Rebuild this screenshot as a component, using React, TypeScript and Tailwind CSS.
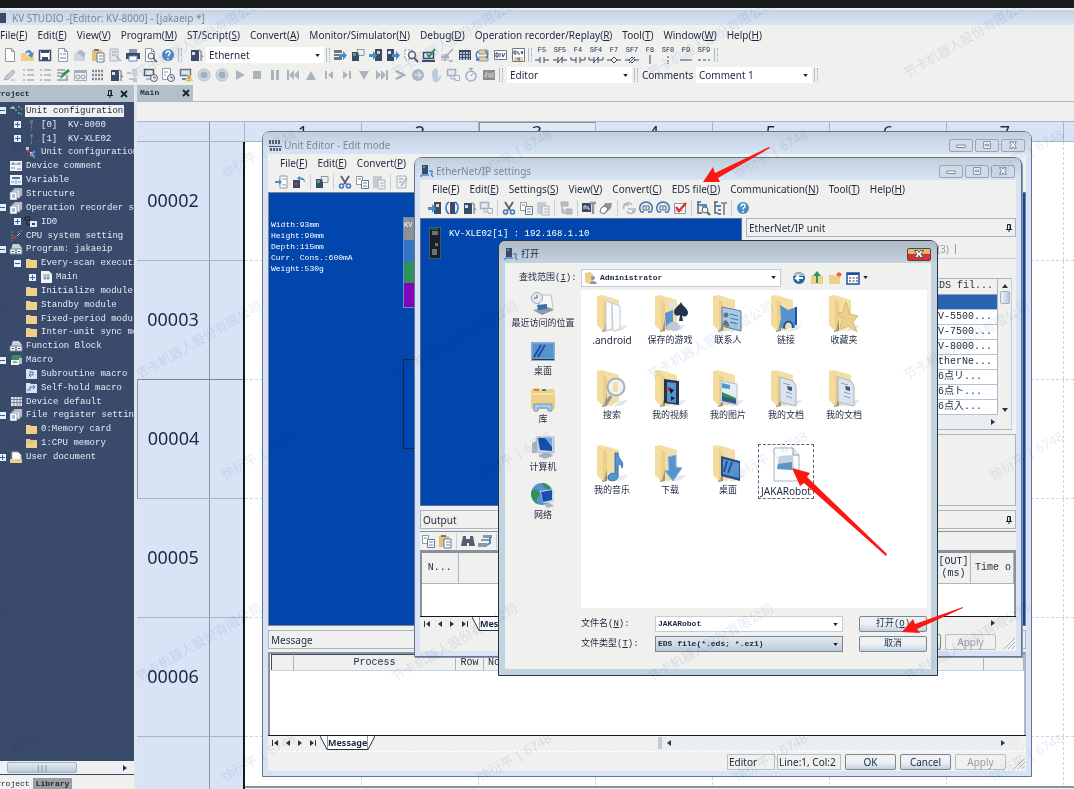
import { ReactNode } from "react";
import clsx from "clsx";

const UI = "font-['Noto_Sans','Noto_Sans_CJK_SC',sans-serif]";
const MONO = "font-['Liberation_Mono','Noto_Sans_CJK_JP',monospace]";
const SONG = "font-['Liberation_Mono','Noto_Sans_CJK_SC',monospace]";

type Entry = [string, string];

const MAIN_MENU: Entry[] = [
  ["File", "F"], ["Edit", "E"], ["View", "V"], ["Program", "M"], ["ST/Script", "S"], ["Convert", "A"],
  ["Monitor/Simulator", "N"], ["Debug", "D"], ["Operation recorder/Replay", "R"], ["Tool", "T"], ["Window", "W"], ["Help", "H"],
];
const UNIT_MENU: Entry[] = [["File", "F"], ["Edit", "E"], ["Convert", "P"]];
const EIP_MENU: Entry[] = [
  ["File", "F"], ["Edit", "E"], ["Settings", "S"], ["View", "V"], ["Convert", "C"], ["EDS file", "D"],
  ["Communication", "N"], ["Tool", "T"], ["Help", "H"],
];

const FILE_BAR = ["new", "open", "save", "doc", "openOff", "paste", "findOff", "print", "preview", "help"];
const COMM_BAR = ["send", "plcNote", "plcIn", "plcOut", "find", "verify", "gridOff", "table", "sync", "div", "dev"];
const VIEW_BAR = ["pen", "list", "list", "edit", "watch", "pattern", "plc", "download", "pcClock", "docClock", "pcWarn"];
const PLAY_BAR = [
  "record", "record", "play", "stop", "pause", "first", "up", "prev", "next", "down", "last", "gt",
  "globe", "hand", "pcOff", "timer", "badge",
];
const UNIT_BAR = ["import", "undoPlc", "|", "plcNote", "|", "cut", "copy", "pasteOff", "|", "editOff"];
const EIP_BAR = [
  "plcIn", "swap", "plc", "pcOff", "|", "cut", "copy", "pasteOff", "|", "treeOff", "|", "tool", "eraser", "|",
  "syncOff", "circle", "circle", "check", "|", "treeFind", "treeTool", "|", "help",
];
const FKEYS: Entry[] = [
  ["F5", "M1 8h5M10 8h5M6 5v6M10 5v6"], ["SF5", "M1 8h5M10 8h5M6 5v6M10 5v6M5 11l6-6"],
  ["F4", "M1 5v3h5M10 8h5V5M6 5v6M10 5v6"], ["SF4", "M1 5v3h5M10 8h5V5M6 5v6M10 5v6M5 11l6-6"],
  ["F7", "M1 8h4M11 8h4M8 5l3 3-3 3-3-3z"], ["SF7", "M1 8h4M11 8h4M8 5l3 3-3 3-3-3zM5 11l6-6"],
  ["F8", "M8 3v9"], ["SF8", "M8 4v2M8 8v2M8 11v1"], ["F9", "M2 8h12"], ["SF9", "M2 8h3M7 8h3M12 8h2"],
];

interface Node {
  level: 0 | 1 | 2;
  icon: string;
  text: string;
  sign?: "+" | "-";
  active?: boolean;
}

const TREE: Node[] = [
  { level: 0, icon: "units", text: "Unit configuration", sign: "-", active: true },
  { level: 1, icon: "unit", text: "[0]  KV-8000", sign: "+" },
  { level: 1, icon: "unit", text: "[1]  KV-XLE02", sign: "+" },
  { level: 1, icon: "config", text: "Unit configuration" },
  { level: 0, icon: "comment", text: "Device comment" },
  { level: 0, icon: "variable", text: "Variable" },
  { level: 0, icon: "stack", text: "Structure" },
  { level: 0, icon: "stack", text: "Operation recorder setting", sign: "-" },
  { level: 1, icon: "id", text: "ID0", sign: "+" },
  { level: 0, icon: "cpu", text: "CPU system setting" },
  { level: 0, icon: "program", text: "Program: jakaeip", sign: "-" },
  { level: 1, icon: "folder", text: "Every-scan execution", sign: "-" },
  { level: 2, icon: "sheet", text: "Main", sign: "+" },
  { level: 1, icon: "folder", text: "Initialize module" },
  { level: 1, icon: "folder", text: "Standby module" },
  { level: 1, icon: "folder", text: "Fixed-period module" },
  { level: 1, icon: "folder", text: "Inter-unit sync module" },
  { level: 0, icon: "program", text: "Function Block" },
  { level: 0, icon: "macro", text: "Macro", sign: "-" },
  { level: 1, icon: "sub", text: "Subroutine macro" },
  { level: 1, icon: "hold", text: "Self-hold macro" },
  { level: 0, icon: "memory", text: "Device default" },
  { level: 0, icon: "stack", text: "File register setting", sign: "-" },
  { level: 1, icon: "folder", text: "0:Memory card" },
  { level: 1, icon: "folder", text: "1:CPU memory" },
  { level: 0, icon: "userdoc", text: "User document", sign: "+" },
];
const INDENT = ["pl-0", "pl-[15px]", "pl-[30px]"];

const EDS_ROWS = ["", "KV-5500...", "KV-7500...", "KV-8000...", "EtherNe...", "16点リ...", "16点ト...", "16点入..."];

const PLACES: Entry[] = [
  ["recent", "最近访问的位置"], ["desktop", "桌面"], ["library", "库"], ["computer", "计算机"], ["network", "网络"],
];
const FILES: Entry[] = [
  ["files", ".android"], ["games", "保存的游戏"], ["contacts", "联系人"], ["links", "链接"], ["favorites", "收藏夹"],
  ["search", "搜索"], ["videos", "我的视频"], ["pictures", "我的图片"], ["documents", "我的文档"], ["documents", "我的文档"],
  ["music", "我的音乐"], ["downloads", "下载"], ["screen", "桌面"], ["eds", "JAKARobot"],
];

export default function App() {
  return (
    <div className={clsx("relative flex h-screen flex-col overflow-hidden bg-[#f0f0ee] text-[10px] leading-[14px] text-[#1d2940]", UI)}>
      <div className="h-2 shrink-0 bg-[#1b1b1d]" />
      <header className="flex h-[17px] shrink-0 items-center gap-1 border-t-2 border-[#e9f0f6] bg-linear-to-b from-[#c3d2e0] to-[#d8e4f6] pr-2 text-[#7f8892]">
        <span className="h-2.5 w-1.5 bg-[#3a4a6b]" />
        <h1 className="ml-0.5">KV STUDIO -[Editor: KV-8000] - [jakaeip *]</h1>
      </header>
      <MenuBar items={MAIN_MENU} className="h-5" />
      <div className="flex h-5 shrink-0 items-center">
        <IconGroup names={FILE_BAR} className="w-[176px] pl-0.5" />
        <Grip />
        <div className="flex w-5 justify-end"><Icon name="plc" /></div>
        <Combo label="Connection" value="Ethernet" className="ml-0.5 h-4 w-[118px] bg-white" />
        <Grip />
        <IconGroup names={COMM_BAR} className="w-[194px]" />
        <Grip />
        <div className="flex w-[178px] justify-between">
          {FKEYS.map(([key, d]) => (
            <button key={key} className={clsx("flex w-4 flex-col items-center text-[7px] leading-[7px]", MONO)}>
              {key}
              <svg className="h-2.5 w-4" viewBox="0 2 16 10" fill="none" stroke="#3a4a6b"><path d={d} /></svg>
            </button>
          ))}
        </div>
        <Grip />
      </div>
      <div className="flex h-5 shrink-0 items-center">
        <IconGroup names={VIEW_BAR} className="w-[194px] pl-0.5" />
        <IconGroup names={PLAY_BAR} className="ml-0.5 w-[301px]" />
        <Grip />
        <Combo label="Mode" value="Editor" className="ml-0.5 h-4 w-[125px] bg-white" />
        <Grip />
        <span className="mr-1 ml-0.5 w-[50px]">Comments</span>
        <Combo label="Comments" value="Comment 1" className="h-4 w-[116px] bg-white" />
        <Grip />
      </div>
      <div className="flex min-h-0 flex-1">
        <ProjectPane />
        <Ladder />
      </div>

      <UnitEditor />
      <EtherNetWindow />
      <OpenDialog />
      <Watermark />
      <Arrows />
    </div>
  );
}

function MenuBar({ items, className }: { items: Entry[]; className: string }) {
  return (
    <nav className={clsx("flex shrink-0 items-center gap-2.5 whitespace-nowrap", className)}>
      {items.map(([text, key]) => (
        <button key={text}>{text}(<u className="underline-offset-1">{key}</u>)</button>
      ))}
    </nav>
  );
}

function IconGroup({ names, className }: { names: string[]; className: string }) {
  return (
    <div className={clsx("flex justify-between", className)}>
      {names.map((name, i) => <button key={i} aria-label={name}><Icon name={name} /></button>)}
    </div>
  );
}

function ToolBar({ names, className }: { names: string[]; className: string }) {
  return (
    <div className={clsx("flex shrink-0 items-center gap-px", className)}>
      {names.map((name, i) => name === "|"
        ? <span key={i} className="flex w-[5px] justify-center"><span className="h-4 w-px bg-[#c3d0de]" /></span>
        : <button key={i} aria-label={name}><Icon name={name} /></button>)}
    </div>
  );
}

function Grip() {
  return (
    <span className="mx-0.5 flex h-3.5 w-1 shrink-0 justify-between">
      <span className="w-px bg-[#a9bdd6]" />
      <span className="border-l border-dotted border-[#9aa9bb]" />
    </span>
  );
}

function Combo({ label, value, className, children }: { label: string; value: string; className: string; children?: ReactNode }) {
  return (
    <div className={clsx("relative flex items-center", className)}>
      {children}
      <select aria-label={label} defaultValue={value} className="h-full min-w-0 flex-1 appearance-none bg-transparent pl-[3px] outline-none">
        <option>{value}</option>
      </select>
      <Caret />
    </div>
  );
}

function Caret() {
  return <svg className="mr-1 h-[3px] w-[5px] shrink-0" viewBox="0 0 6 4"><path d="M0 0h6L3 4z" fill="#16202f" /></svg>;
}

function Pin() {
  return <svg className="h-2 w-2" viewBox="0 0 8 8" fill="none" stroke="#16202f"><path d="M2.5 5V.5h3V5M1 5.5h6M4 5v3M5 1v4" /></svg>;
}

function Cross() {
  return <svg className="h-2 w-2" viewBox="0 0 8 8" stroke="#16202f" strokeWidth="1.8"><path d="M1 1l6 6M7 1L1 7" /></svg>;
}

function ProjectPane() {
  return (
    <aside className="flex w-[137px] shrink-0 flex-col border-r-[3px] border-[#dfe6ee] max-md:w-28">
      <div className={clsx("flex h-[17px] shrink-0 items-center bg-[#b3c0cc] pr-1.5 text-[8px] font-bold", MONO)}>
        <span className="-ml-1 flex-1">Project</span>
        <Pin /><span className="w-1.5" /><Cross />
      </div>
      <div className={clsx("flex-1 overflow-hidden bg-[#3a4a6b] pt-0.5 text-[9px] text-[#e6ebf2]", MONO)}>
        <ul className="flex h-[360px] flex-col">
          {TREE.map((n, i) => (
            <li key={i} className={clsx("flex min-h-0 flex-1 items-center whitespace-pre", INDENT[n.level])}>
              <span className="-ml-px flex w-2 shrink-0">
                {n.sign && (
                  <svg className="h-[7px] w-[7px]" viewBox="0 0 7 7">
                    <path d="M0 0h7v7H0z" fill="#e8eef5" />
                    <path d={n.sign === "+" ? "M1 3.5h5M3.5 1v5" : "M1 3.5h5"} stroke="#2b62a8" />
                  </svg>
                )}
              </span>
              <svg className="ml-0.5 h-3 w-3.5 shrink-0" viewBox="0 0 14 12">{TREE_ICONS[n.icon]}</svg>
              <span className={clsx("ml-0.5 px-px leading-[12px]", n.active && "bg-[#f0f0ee] text-[#1d2940]")}>{n.text}</span>
            </li>
          ))}
        </ul>
      </div>
      <div className="flex h-[14px] shrink-0 items-center border-b border-[#3a4a6b] bg-[#eef0f2]">
        <div className="ml-[7px] flex h-[11px] w-[70px] items-center justify-center rounded-xs border border-[#9db0c4] bg-linear-to-b from-[#e3ebf3] to-[#b9cad9] text-[7px] text-[#5d6a78]">|||</div>
        <Tri className="mr-1.5 ml-auto" d="M1 0l4 3-4 3z" />
      </div>
      <div className={clsx("flex h-[14px] shrink-0 items-end text-[8px] leading-[11px] font-bold", MONO)}>
        <button className="-ml-1 w-[37px] text-left font-normal">Project</button>
        <button className="w-[39px] bg-[#9a9da1]">Library</button>
      </div>
    </aside>
  );
}

function Tri({ d, className }: { d: string; className?: string }) {
  return <svg className={clsx("h-1.5 w-1.5 shrink-0", className)} viewBox="0 0 6 6"><path d={d} fill="#29344a" /></svg>;
}

function Ladder() {
  return (
    <main className="flex min-w-0 flex-1 flex-col">
      <div className="flex h-[17px] shrink-0 border-b border-[#a9b9c8]">
        <div className={clsx("flex w-14 items-center justify-between bg-[#b3c0cc] px-[3px] text-[8px] font-bold", MONO)}>Main <Cross /></div>
      </div>
      <div className="h-[19px] shrink-0" />
      <div className="flex h-[21px] shrink-0 overflow-hidden border-y border-[#a9b5c0] bg-[#d8e4f6] text-[18px] leading-[20px]">
        <span className="w-[73px] shrink-0 border-r border-[#8f959c]" />
        <span className="w-[35px] shrink-0 border-r border-[#a9b5c0]" />
        {[1, 2, 3, 4, 5, 6, 7, 8].map(n => (
          <span key={n} className={clsx("w-[117px] shrink-0 border-r border-[#a9b5c0] text-center", n === 3 && "bg-[#dfe8f6] shadow-[inset_1px_1px_0_#8f8f90]")}>{n}</span>
        ))}
      </div>
      <div className="flex min-h-0 flex-1">
        <div className="w-[108px] shrink-0 overflow-hidden border-r-2 border-[#16181c] bg-[#d8e4f6] text-[18px]">
          {["00002", "00003", "00004", "00005", "00006", "00007"].map(n => (
            <div key={n} className={clsx("flex h-[119px] border-b", n === "00003" ? "border-[#7f868e]" : "border-[#a9b5c0]")}>
              <span className={clsx("flex w-[73px] items-center justify-center border-r border-[#8f959c] pb-0.5", n === "00004" && "border-l")}>{n}</span>
            </div>
          ))}
        </div>
        <div className="mb-px min-w-0 flex-1 overflow-hidden border-b-2 border-[#8d929a] bg-white">
          {[0, 1, 2, 3, 4, 5].map(r => (
            <div key={r} className="flex h-[119px] border-b border-dashed border-[#ccd7e6]">
              {[0, 1, 2, 3, 4, 5, 6].map(c => <span key={c} className="w-[117px] shrink-0 border-r border-dashed border-[#ccd7e6]" />)}
            </div>
          ))}
        </div>
      </div>
    </main>
  );
}

function WindowTitle({ icon, children }: { icon: string; children: ReactNode }) {
  return (
    <header className="flex h-[22px] shrink-0 items-center rounded-t-md bg-linear-to-b from-[#c0cfdc] to-[#d8e4f6] pt-1 pl-1 text-[#7f8892]">
      <Icon name={icon} />
      <h2 className="ml-px flex-1">{children}</h2>
      <div className="flex gap-0.5 pr-1.5">
        {["M3 6h10v3H3z", "M4 2h8v8H4zM6 5h4v2H6z", "M4 2h3l1 2 1-2h3l-2 4 2 4H9L8 8l-1 2H4l2-4z"].map(d => (
          <button key={d} aria-label="Window control" className="flex h-[13px] w-6 items-center justify-center rounded-xs border border-[#98a5b4] bg-[#cfdbe8]">
            <svg className="h-2.5 w-4" viewBox="0 0 16 12" fill="#fff" stroke="#6c7684"><path d={d} /></svg>
          </button>
        ))}
      </div>
    </header>
  );
}

function PanelHead({ children, pin }: { children: ReactNode; pin?: boolean }) {
  return (
    <div className="flex h-[19px] shrink-0 items-center border border-[#a9b5c0] px-0.5">
      <span className="flex-1">{children}</span>
      {pin && <Pin />}
    </div>
  );
}

function SheetTabs() {
  return (
    <div className="flex h-4 shrink-0 items-start border-t border-[#16181c]">
      <div className="flex h-[14px] w-[52px] items-center justify-between pr-1 pl-1">
        <Tri d="M0 0h1v6H0zM6 0v6L2 3z" /><Tri d="M5 0v6L1 3z" /><Tri d="M1 0v6l4-3z" /><Tri d="M0 0v6l4-3zM5 0h1v6H5z" />
      </div>
      <svg className="h-[14px] w-2 shrink-0" viewBox="0 0 8 14" fill="#fff" stroke="#29344a"><path d="M0 0l7 13.5H8V0" /></svg>
      <button className="h-[14px] border-b border-[#29344a] bg-white text-[9px] font-bold">Message</button>
      <svg className="h-[14px] w-2 shrink-0" viewBox="0 0 8 14" fill="#fff" stroke="#29344a"><path d="M8 0L1 13.5H0V0" /></svg>
    </div>
  );
}

function PushButton({ children, disabled, className }: { children: ReactNode; disabled?: boolean; className?: string }) {
  return (
    <button
      disabled={disabled}
      className={clsx(
        "flex h-4 items-center justify-center rounded-xs border",
        disabled ? "border-[#b5bfca] text-[#989ea6]" : "border-[#7c8794] bg-linear-to-b from-[#eef2f5] from-50% to-[#c3d2de]",
        className,
      )}
    >
      {children}
    </button>
  );
}

function SizeGrip() {
  return <svg className="h-4 w-4" viewBox="0 0 16 16" stroke="#a3b0bf"><path d="M4 15L15 4M8 15l7-7M12 15l3-3" /></svg>;
}

function UnitEditor() {
  return (
    <section className="absolute top-[131px] left-[262px] flex h-[646px] w-[770px] flex-col rounded-t-lg border border-[#68748a] bg-[#d8e4f6]">
      <WindowTitle icon="rack">Unit Editor - Edit mode</WindowTitle>
      <div className="mx-[5px] mb-[5px] flex min-h-0 flex-1 flex-col bg-[#f0f0ee]">
        <MenuBar items={UNIT_MENU} className="h-[18px] pl-3" />
        <ToolBar names={UNIT_BAR} className="h-5 pl-1.5" />
        <div className={clsx("relative h-[434px] shrink-0 border border-[#7c8794] bg-[#0046ad] pt-[26px] pl-0.5 text-[8px] leading-[11px] text-white", MONO)}>
          <p>Width:93mm</p>
          <p>Height:90mm</p>
          <p>Depth:115mm</p>
          <p>Curr. Cons.:600mA</p>
          <p>Weight:530g</p>
          {/* unit module, partly hidden by the settings window */}
          <div className="absolute top-6 left-[134px] w-10 border border-[#5594cf]">
            <div className="h-[22px] bg-[#8d9096] text-[7px] leading-[14px]">KV</div>
            <div className="h-[22px] bg-[#3574c0]" />
            <div className="h-[21px] bg-[#329257]" />
            <div className="h-6 bg-[#8104b8]" />
          </div>
          <div className="absolute top-[166px] left-[134px] h-[90px] w-10 border border-[#13264a]" />
        </div>
        <div className="mt-1"><PanelHead>Message</PanelHead></div>
        <div className="mt-[3px] flex min-h-0 flex-1 flex-col">
          <div className="min-h-0 flex-1 overflow-hidden border-2 border-r-[#a9b5c0] border-b-0 border-[#8b919a] bg-white pl-px">
            <table className={clsx("w-full table-fixed border-t border-l border-[#3a4a6b] bg-[#f0f0ee]", MONO)}>
              <thead>
                <tr className="h-4 border-b border-[#c3d0e4] [&>th]:border-r [&>th]:border-[#a9b5c0] [&>th]:font-normal">
                  <th className="w-[22px]" /><th className="w-[162px]">Process</th><th className="w-7">Row</th>
                  <th className="pl-1 text-left">No</th><th className="w-10" />
                </tr>
              </thead>
            </table>
          </div>
          <div className="relative">
            <SheetTabs />
            <div className="absolute top-0.5 right-2 flex h-3 w-[360px] items-center justify-between border-l-4 border-[#c3ccd6] bg-[#eaedf2] px-1">
              <Tri d="M5 0v6L1 3z" /><Tri d="M1 0v6l4-3z" className="mr-2" />
            </div>
          </div>
        </div>
        <div className="flex h-[20px] shrink-0 items-center justify-end gap-1 border-t border-dashed border-white">
          <span className="-mr-0.5 h-4 w-12 border border-[#b5bfca] pl-px leading-[14px]">Editor</span>
          <span className="h-4 w-16 border border-[#b5bfca] pl-px whitespace-nowrap">Line:1, Col:2</span>
          <PushButton className="w-[51px]">OK</PushButton>
          <PushButton className="w-[51px]">Cancel</PushButton>
          <PushButton className="w-[51px]" disabled>Apply</PushButton>
          <SizeGrip />
        </div>
      </div>
    </section>
  );
}

function EtherNetWindow() {
  return (
    <section className="absolute top-[157px] left-[414px] flex h-[500px] w-[608px] flex-col rounded-t-lg border border-[#68748a] bg-[#d8e4f6] shadow-[1px_1px_0_#8d98a8]">
      <WindowTitle icon="net">EtherNet/IP settings</WindowTitle>
      <div className="mx-[5px] mb-[5px] flex min-h-0 flex-1 flex-col bg-[#f0f0ee]">
        <MenuBar items={EIP_MENU} className="h-[18px] pl-3" />
        <ToolBar names={EIP_BAR} className="h-5 pl-[7px]" />
        <div className="flex h-[288px] shrink-0 gap-1">
          <div className={clsx("flex w-[322px] shrink-0 gap-2 border border-[#5a6f94] bg-[#0046ad] pt-2 pl-2 text-[9px] text-white", MONO)}>
            <svg className="h-8 w-3" viewBox="0 0 12 32">
              <path d="M0 0h12v32H0z" fill="#1b1e24" stroke="#5594cf" />
              <path d="M3 4h6v4H3zM6 16h3v3H6zM3 22h5v6H3z" fill="#6d7278" /><path d="M2 2h7" stroke="#329257" />
            </svg>
            <span>KV-XLE02[1] : 192.168.1.10</span>
          </div>
          <div className="flex min-w-0 flex-1 flex-col">
            <PanelHead pin>EtherNet/IP unit</PanelHead>
            <div className="mt-0.5 flex h-5 items-center justify-end border-b border-[#c3d0e4] pr-[60px] text-[#98a0aa]">(3)<span className="ml-1.5 h-2.5 w-px bg-[#98a0aa]" /></div>
            <div className="mt-[19px] mr-1 flex border-y border-[#a9b5c0]">
              <div className="min-w-0 flex-1">
                <table className={clsx("w-full table-fixed border-r border-[#a9b5c0] text-left text-[10px] whitespace-nowrap", MONO)}>
                  <thead>
                    <tr className="h-[15px] border-b border-[#8fa0b5]"><th className="pl-[187px] font-normal">EDS fil...</th></tr>
                  </thead>
                  <tbody>
                    {EDS_ROWS.map((row, i) => (
                      <tr key={i} className={clsx("h-[15px] border-b border-[#b4c3d4] leading-[14px]", i === 0 ? "bg-[#2a63b4]" : "bg-white")}>
                        <td className="pl-[186px]">{row}</td>
                      </tr>
                    ))}
                  </tbody>
                </table>
                <div className="flex h-3.5 items-center justify-end bg-[#eaeef3] pr-0.5"><Tri d="M1 0v6l4-3z" /></div>
              </div>
              <div className="flex w-3.5 flex-col items-center border-r border-[#c3d0e4] pt-1">
                <Tri d="M0 5h6L3 1z" />
                <div className="mt-0.5 h-[13px] w-2.5 rounded-xs border border-[#9db0c4] bg-linear-to-r from-[#e9eff5] to-[#b9cad9]" />
                <Tri d="M0 1h6L3 5z" className="mt-auto mb-4" />
              </div>
            </div>
            <div className="mt-1 flex-1 border border-[#a9b5c0]" />
          </div>
        </div>
        <div className="mt-1"><PanelHead pin>Output</PanelHead></div>
        <ToolBar names={["copy", "paste", "|", "binoculars", "stairs", "|"]} className="mt-0.5 h-5 border-y border-[#8b919a]" />
        <div className="h-[65px] shrink-0 border-2 border-b-0 border-[#8b919a] bg-white">
          <table className={clsx("w-full table-fixed bg-[#f0f0ee] leading-[12px]", MONO)}>
            <thead>
              <tr className="h-[30px] border-b border-[#a9b5c0] [&>th]:border-r [&>th]:border-[#a9b5c0] [&>th]:font-normal">
                <th className="w-9">N...</th><th /><th className="w-[34px]">[OUT]<br />(ms)</th><th className="w-[43px] overflow-hidden pl-1 text-left whitespace-nowrap">Time o</th>
              </tr>
            </thead>
          </table>
        </div>
        <div className="relative">
          <SheetTabs />
          <Tri d="M1 0v6l4-3z" className="absolute top-1 right-5" />
        </div>
        <div className="flex flex-1 items-center justify-end gap-1">
          <PushButton className="w-[51px]">Cancel</PushButton>
          <PushButton className="w-[51px]" disabled>Apply</PushButton>
          <SizeGrip />
        </div>
      </div>
    </section>
  );
}

function OpenDialog() {
  return (
    <section className="absolute top-[240px] left-[498px] flex h-[436px] w-[440px] flex-col rounded-t-lg border border-[#2c3442] bg-[#c3d2df]">
      <header className="flex h-[22px] shrink-0 items-center rounded-t-md bg-linear-to-b from-[#afbbc6] to-[#c3d2df] pt-1 pr-1.5 pl-1">
        <Icon name="net" />
        <h2 className="ml-0.5 flex-1 text-[9px]">打开</h2>
        <button aria-label="Close" className="flex h-[13px] w-6 items-center justify-center rounded-xs border border-[#5c4033] bg-linear-to-b from-[#e0b878] from-40% to-[#d8302a] to-50%">
          <svg className="h-2 w-2.5" viewBox="0 0 10 8" fill="#fff" stroke="#4d5764"><path d="M.5.5h3L5 2.500 6.500.5h3L7 4l2.500 3.500h-3L5 5.500 3.500 7.500h-3L3 4z" /></svg>
        </button>
      </header>
      <div className={clsx("mx-[6px] mb-[6px] flex min-h-0 flex-1 flex-col bg-[#f0f0ee] text-[9px]", SONG)}>
        <div className="flex h-[27px] shrink-0 items-center pt-0.5">
          <label className="w-[76px] pl-3.5 whitespace-nowrap">查找范围(<u>I</u>):</label>
          <Combo label="查找范围" value="Administrator" className="h-[18px] w-[200px] border border-[#c3ccd8] bg-white pl-[3px] text-[8px] font-bold">
            <svg className="h-3 w-3" viewBox="0 0 12 12">
              <path d="M0 1l5-1 3 2v8l-4 2-4-2z" fill="#ecd08a" /><circle cx="8" cy="6" r="2" fill="#8d949c" /><path d="M5 12c0-4 6-4 7 0z" fill="#8d949c" />
            </svg>
          </Combo>
          <div className="ml-2.5 flex items-center gap-0.5">
            {["back", "upFolder", "newFolder", "views"].map(n => <button key={n} aria-label={n}><Icon name={n} /></button>)}
            <Caret />
          </div>
        </div>
        <div className="flex min-h-0 flex-1">
          <nav className="flex w-[76px] shrink-0 flex-col gap-0.5">
            {PLACES.map(([kind, name]) => (
              <button key={name} className="flex h-[46px] flex-col items-center leading-[14px] whitespace-nowrap">
                <svg className="h-[27px] w-7" viewBox="0 0 28 27">{PLACE_ART[kind]}</svg>
                <span>{name}</span>
              </button>
            ))}
          </nav>
          <div className="flex min-w-0 flex-1 flex-col pr-1">
            <div className={clsx("grid h-[318px] shrink-0 auto-rows-[75px] grid-cols-[repeat(auto-fill,58px)] bg-white pt-1 pl-0.5", UI)}>
              {FILES.map(([kind, name], i) => (
                <button
                  key={i}
                  className={clsx("flex h-[55px] flex-col items-center whitespace-nowrap", kind === "eds" && "mx-px border border-dashed border-[#55606f]", /^[.A-Z]/.test(name) && "text-[10px]")}
                >
                  <svg className="h-[39px] w-10 shrink-0" viewBox="0 0 40 39">
                    {kind !== "eds" && <Folder />}
                    {FILE_ART[kind]}
                  </svg>
                  <span className="leading-[14px]">{name}</span>
                </button>
              ))}
            </div>
            <div className="mt-2 grid grid-cols-[74px_1fr_68px] items-center gap-y-1 leading-[16px]">
              <label htmlFor="file-name">文件名(<u>N</u>):</label>
              <div className="mr-4 flex h-4 items-center border border-[#c3ccd8] bg-white">
                <input id="file-name" defaultValue="JAKARobot" className="min-w-0 flex-1 pl-0.5 text-[8px] font-bold outline-none" />
                <Caret />
              </div>
              <PushButton className="border-[#3d7fc0] bg-[#dfe7ee]">打开(<u>O</u>)</PushButton>
              <label htmlFor="file-type">文件类型(<u>T</u>):</label>
              <div className="mr-4 flex h-4 items-center border border-[#7c8794] bg-linear-to-b from-[#e4eaef] to-[#bccbd8]">
                <select id="file-type" className="min-w-0 flex-1 appearance-none pl-0.5 text-[8px] font-bold outline-none">
                  <option>EDS file(*.eds; *.ez1)</option>
                </select>
                <Caret />
              </div>
              <PushButton>取消</PushButton>
            </div>
          </div>
        </div>
      </div>
    </section>
  );
}

function Watermark() {
  return (
    <div className="pointer-events-none absolute inset-0 overflow-hidden text-[13px] leading-[14px] whitespace-nowrap text-[#7d9cc8]/20 mix-blend-multiply">
      {[0, 1, 2].map(r => [-1, 0, 1, 2, 3].map(c => (
        <div key={`${r}${c}`}>
          <span className="absolute origin-bottom-left -rotate-30" style={{ left: 140 + c * 256, top: 66 + r * 302 }}>节卡机器人股份有限公司</span>
          <span className="absolute origin-bottom-left -rotate-30" style={{ left: 226 + c * 256, top: 166 + r * 302 }}>徐衍平 | 6748</span>
        </div>
      )))}
    </div>
  );
}

function Arrows() {
  return (
    <svg className="pointer-events-none absolute top-0 left-0 h-[789px] w-[1074px]" viewBox="0 0 1074 789" fill="#fb1712">
      <path d="M703 182l10-15 2 6 54-26 1 1-52 30 2 4z" />
      <path d="M792 468l18 5-3 4 80 77-1 2-82-73-4 3z" />
      <path d="M902 632l11-13 2 5 48-17v1l-46 21 3 4z" />
    </svg>
  );
}

function Folder() {
  return (
    <g>
      <path d="M5 2l5-1 17 5v26l-8 5-9-1z" fill="#f3dfa6" />
      <path d="M10 8l5 6v23l-5 1z" fill="#9b9484" />
      <path d="M5 2l10 6v17l-3 12-7-6z" fill="#ecd08a" />
      <path d="M5 2l6 4v31l-6-6z" fill="#f4dc9c" />
      <path d="M27 32l9-1-5 5-10 2z" fill="#e3e8ee" />
    </g>
  );
}

const FILE_ART: Record<string, ReactNode> = {
  files: <path d="M14 7l6 2v26l-6 2zM20 9l8 3v23l-7 2z" fill="#fafbfd" stroke="#c3ccd6" />,
  games: <g><path d="M15 19l8-3v15l-7 4z" fill="#5594cf" /><circle cx="22" cy="11" r="3" fill="#dce6f0" /><path d="M31 8c2 5 7 6 7 11 0 3-4 5-6 2l1 6h-4l1-6c-3 2-6 0-6-3 0-4 5-6 7-10z" fill="#26334f" /><path d="M16 33c4-7 12-7 15 1l-4 3-9-1z" fill="#bfc9d3" /></g>,
  contacts: <g><path d="M14 13l19 4v20l-19-5z" fill="#a9cbe8" stroke="#5d7ea5" /><path d="M22 20l8 2M22 24l8 2M22 28l8 2" stroke="#3b77b5" /><circle cx="18" cy="21" r="2.500" fill="#5f7485" /><path d="M15 31c0-7 6-6 6 2z" fill="#5f7485" /></g>,
  links: <g><path d="M14 11l8 5 8-3v10l-1 11-7-6-2 7-7-1 2-9z" fill="#5594cf" /><path d="M30 13v18" stroke="#1b51a5" strokeWidth="2" /><path d="M18 34c0-8 9-9 9 0" fill="#f3dfa6" stroke="#1b51a5" strokeWidth="2" /></g>,
  favorites: <path d="M22 8l4 12 8 2-5 6 4 10-9-6-8 3 2-10-4-6 5-1z" fill="#ecd08a" stroke="#d9ba70" />,
  search: <g><path d="M19 27l-5 8" stroke="#8d949c" strokeWidth="3" /><circle cx="24" cy="18" r="8.500" fill="#edf2f4" stroke="#a4b1bc" strokeWidth="2" /><path d="M21 13h5v10h-5z" fill="#f3dfa6" /></g>,
  videos: <g><path d="M14 10l15 2v24l-15-2z" fill="#26334f" /><path d="M17 13l9 1v20l-9-1z" fill="#5594cf" /><path d="M18 18l6 3-3 4zM21 27l4 2-4 3z" fill="#16202f" /><circle cx="18" cy="20" r="1.500" fill="#e0302a" /></g>,
  pictures: <g><path d="M13 12l16 3v21l-16-3z" fill="#e4edf6" stroke="#b3c0cc" /><path d="M14 14l8 2v4l-8-1z" fill="#5594cf" /><path d="M14 23l14 6v4l-14-3z" fill="#329257" /><path d="M14 27l14 4v4l-14-3z" fill="#3a5a86" /></g>,
  documents: <g><path d="M14 8l13 4 3 5v20l-16-4z" fill="#d9e4ee" stroke="#a9b5c0" /><path d="M17 14l7 2M20 23l6 2M20 27l6 2" stroke="#8fa0b5" /><path d="M21 17l5 1v4l-4-1z" fill="#3a5a86" /></g>,
  music: <path d="M26 9c0 8 7 7 4 15-1-4-3-4-4-4v13c-1 5-11 5-10 0 1-3 4-5 7-3V9z" fill="#5594cf" stroke="#3572b5" />,
  downloads: <path d="M18 13l8-2v12l6 1-9 13-8-10 4-1z" fill="#5594cf" stroke="#8db6de" />,
  screen: <g><path d="M13 12l19 5v20l-19-5z" fill="#2c4f83" /><path d="M15 15l16 4v15l-16-4z" fill="#5594cf" /><path d="M16 28l3-11M20 29l4-11" stroke="#1b51a5" strokeWidth="2" /></g>,
  eds: <g><path d="M8 3h19l6 7v26H8z" fill="#fafbfd" stroke="#a9b5c0" /><path d="M27 3v7h6" fill="#e4e8ed" stroke="#8d98a5" /><path d="M13 11l14-1 1 15-17-1z" fill="#c5d2de" /><path d="M12 19l14-2v8l-15-1z" fill="#5f94c6" /></g>,
};

const PLACE_ART: Record<string, ReactNode> = {
  recent: <g><path d="M9 5h13l2 13-13 2z" fill="#f4f7fa" stroke="#b3c0cc" /><circle cx="8" cy="8" r="5.500" fill="#e4ebf1" stroke="#9aa9b8" /><path d="M8 5v3H5" fill="none" stroke="#55606f" /><path d="M4 20l15-3 6 3-12 5z" fill="#8d9aa8" /><path d="M8 15l10-1v5l-9 1z" fill="#3a6ea8" /></g>,
  desktop: <g><path d="M2 4h24v19H2z" fill="#8fb0d0" /><path d="M3.500 5.500h21v15h-21z" fill="#5594cf" /><path d="M5 19l7-12M9 19l7-12" stroke="#1b51a5" strokeWidth="2" /><path d="M3 21.500h22" stroke="#26334f" /><circle cx="5" cy="21" r="1" fill="#e0302a" /></g>,
  library: <g><path d="M2 4l3-2h5l2 2h5l2-1h6l1 3v17H2z" fill="#ecd08a" /><path d="M3 8h22" stroke="#fff3cf" /><path d="M5 4h5" stroke="#e07a30" strokeWidth="2" /><path d="M13 4h4" stroke="#329257" strokeWidth="2" /><path d="M5 25v-7h18v7h-4v-3H9v3z" fill="#a9cbe8" stroke="#7296b8" /></g>,
  computer: <g><path d="M3 9l5-2v12H3z" fill="#a9b5c0" /><path d="M7 3h18v16H9z" fill="#c8d4e0" stroke="#9aa9b8" strokeWidth=".7" /><path d="M9 4h14v13l-12-1z" fill="#164db0" /><path d="M16 4h7v9z" fill="#78a8dd" /><path d="M14 19h7l3 3-8 3-7-3z" fill="#a3b1bf" /></g>,
  network: <g><circle cx="13" cy="12" r="11" fill="#5594cf" /><path d="M3 8c5-2 9 2 7 6-3 2-3 5-2 8-5-3-7-9-5-14zM13 1c4 0 8 3 9 6-4 2-8-2-9-6z" fill="#329257" /><path d="M11 9l14-2v13l-11 1z" fill="#d0dae5" /><path d="M12 10l11-2v10l-9 2z" fill="#164db0" /><path d="M15 22l6-1 4 3-7 2z" fill="#a9b5c0" /></g>,
};

const TREE_ICONS: Record<string, ReactNode> = {
  units: <g><path d="M1 3h5M4 1v3" stroke="#d8e4d0" /><path d="M6 5h2M9 2h2M12 4h1M9 8h2M12 9h1" stroke="#49a86c" strokeWidth="2" strokeDasharray="2 1" /></g>,
  unit: <g><path d="M6 1h3v3H6z" fill="#329257" /><path d="M7.500 4v7" stroke="#8d949c" strokeDasharray="1 1" /></g>,
  config: <g><path d="M2 1h3v3H2zM6 6h3v4H6z" fill="#c3ccd6" /><circle cx="4" cy="5" r="1.500" fill="#e0302a" /><path d="M6 10l5-5M10 9v3" stroke="#5594cf" strokeWidth="2" /></g>,
  comment: <g><path d="M1 1h12v10H1z" fill="#f0f4f8" /><path d="M2 4h10M4 2v3M10 2v3M2 8h4M8 9h4" stroke="#7b8693" /></g>,
  variable: <g><path d="M1 1h12v10H1z" fill="#f0f4f8" /><path d="M3 4h8" stroke="#3a77bd" strokeWidth="2" /><path d="M7 6v4M2 8h3M9 8h3" stroke="#7b8693" /></g>,
  stack: <g><path d="M5 0h8v8H5z" fill="#cfd9e3" stroke="#77828f" strokeWidth=".7" /><path d="M3 2h8v8H3z" fill="#e1e8ef" stroke="#77828f" strokeWidth=".7" /><path d="M1 4h7v8H1z" fill="#fff" stroke="#77828f" strokeWidth=".7" /><path d="M3 7h3M3 9h3" stroke="#3a77bd" /></g>,
  id: <g><path d="M1 1h5v3H1zM3 4v5h3" fill="none" stroke="#16202f" /><path d="M6 5h7v6H6z" fill="#e1e8ef" /><path d="M8 7h3v2H8z" fill="#3a4a6b" /></g>,
  cpu: <g><path d="M3 1v10M9 1v3M11 1h2" stroke="#49a86c" strokeDasharray="2 1" /><circle cx="6" cy="7" r="1.500" fill="#e0302a" /><path d="M8 6l3-3" stroke="#ecd08a" /></g>,
  program: <g><path d="M4 1h6l3 4v3H2l1-5z" fill="#c8d2dc" /><path d="M1 6h6v5H1zM7 6h6v5H7z" fill="#f0f4f8" stroke="#77828f" /><path d="M3 8.500h2M9 8.500h2" stroke="#3a4a6b" /></g>,
  macro: <g><path d="M3 1h9l1 5H2z" fill="#329257" /><path d="M2 6h8v5H2z" fill="#f0f4f8" /><path d="M10 4h3v6h-3z" fill="#b3c0cc" /><path d="M4 8h4" stroke="#3a4a6b" /></g>,
  folder: <path d="M2 2h4l1 1h6v8H2z" fill="#eed08a" />,
  sheet: <g><path d="M2 0h8l3 3v9H2z" fill="#f0f4f8" /><path d="M4 4h7M4 7h7M6 5v4M9 5v4" stroke="#7b8693" /></g>,
  sub: <g><path d="M2 1h4l1 1h6v9H2z" fill="#d8e2ec" /><path d="M5 4h4v3H5l2-2M5 7l2 2" fill="none" stroke="#3a77bd" /></g>,
  hold: <g><path d="M2 1h4l1 1h6v9H2z" fill="#d8e2ec" /><path d="M3 8h3V5h5M9 3l2 2-2 2" fill="none" stroke="#3a77bd" /></g>,
  memory: <g><path d="M2 1h11v9H2z" fill="#e1e8ef" /><path d="M2 3.500h11M2 6.500h11M5 1v10M8 1v10M11 1v10" stroke="#77828f" /></g>,
  userdoc: <g><path d="M3 1h6l3 3v6H3z" fill="#fff" stroke="#a9b5c0" /><path d="M1 8h12v4H1z" fill="#ecd08a" /></g>,
};

const PAGE = <path d="M3.500 1.500h6l3 3v10h-9zM9.500 1.500v3h3" fill="#fff" stroke="#8d98a5" />;
const PLC = <path d="M3 3h8v11H3z" fill="#3a4a6b" />;

const ICONS: Record<string, ReactNode> = {
  new: PAGE,
  open: <g><path d="M1 6h5l1 2h7v6H1z" fill="#ecd08a" /><path d="M5 7c1-5 6-5 7-1l2-1-2 6-4-3 2-1c-1-2-3-2-5 0z" fill="#4c8cc8" /></g>,
  openOff: <g><path d="M2 6h11v8H2z" fill="#cdd6df" /><path d="M5 7c1-5 6-5 7-1l2-1-2 6-4-3 2-1z" fill="#a9b8c6" /></g>,
  save: <g><path d="M2.500 3.500h11v10h-11z" fill="#fff" stroke="#3a4a6b" strokeWidth="1.500" /><path d="M4 3h8v3H4zM5 10h6v3H5z" fill="#3a4a6b" /></g>,
  doc: <g>{PAGE}<path d="M5 7h2M8 7h3M5 11h6" stroke="#6c7684" /></g>,
  paste: <g><path d="M2 3h10v11H2z" fill="#e2c27a" /><path d="M4 2h5v2H4z" fill="#6c7684" /><path d="M7 6h7v9H7z" fill="#fff" stroke="#6c7684" /><path d="M9 9h4M9 12h4" stroke="#4c8cc8" /></g>,
  pasteOff: <g><path d="M2 2h9v12H2z" fill="#c3ccd6" /><path d="M7 6h7v9H7z" fill="#eef1f4" stroke="#a9b5c0" /><path d="M9 9h4M9 12h4" stroke="#a9b5c0" /></g>,
  findOff: <g><path d="M3 2h8v12H3z" fill="#e4e8ed" stroke="#a9b5c0" /><path d="M5 5h5M5 8h4M9 9l5 5" stroke="#a9b5c0" strokeWidth="1.500" /></g>,
  print: <g><path d="M4 2h8v4H4z" fill="#8d98a5" /><path d="M1 6h14v6H1z" fill="#3a4a6b" /><path d="M4 9h8v5H4z" fill="#fff" stroke="#4c8cc8" /></g>,
  preview: <g>{PAGE}<circle cx="9" cy="9" r="3" fill="#eef1f4" stroke="#55606f" /><path d="M11 11l4 4" stroke="#55606f" strokeWidth="1.500" /></g>,
  find: <g><path d="M2 3h7v9H2z" fill="#fff" stroke="#8d98a5" strokeDasharray="2 1" /><circle cx="9" cy="8" r="3.500" fill="#eef1f4" stroke="#55606f" strokeWidth="1.500" /><path d="M11 11l4 4" stroke="#55606f" strokeWidth="2" /></g>,
  help: <g><circle cx="8" cy="8" r="6" fill="#4c8cc8" /><path d="M6 6.500c0-3 4-3 4-.5 0 1.500-2 1.500-2 3.500M8 11v1.500" fill="none" stroke="#fff" strokeWidth="1.500" /></g>,
  plc: <g>{PLC}<path d="M4 5h3v3H4z" fill="#d8e4f6" /><path d="M10 3c3 0 4 2 3 5v6M13 8l2 2" fill="none" stroke="#8d949c" strokeWidth="1.500" /></g>,
  send: <g><path d="M2 3h8v3H2zM2 7h8v2H2zM2 10h8v3H2z" fill="#6c7684" /><path d="M7 7h4V4l4 4.500L11 13v-3H7z" fill="#4c8cc8" /></g>,
  plcNote: <g><path d="M2 5h7v9H2z" fill="#3a4a6b" /><path d="M3 6h3v3H3z" fill="#49a86c" /><path d="M7 2.500h7v6H9z" fill="#eef1f4" stroke="#8d98a5" /></g>,
  plcIn: <g><path d="M7 2h7v12H7z" fill="#3a4a6b" /><path d="M9 4h3v3H9z" fill="#ecd08a" /><path d="M1 7h4V4l4 4.500L5 13v-3H1z" fill="#4c8cc8" /></g>,
  plcOut: <g><path d="M2 2h7v12H2z" fill="#3a4a6b" /><path d="M3 4h3v3H3z" fill="#d8e4f6" /><path d="M7 7h4V4l4 4.500L11 13v-3H7z" fill="#4c8cc8" /></g>,
  undoPlc: <g><path d="M2 6h7v8H2z" fill="#3a4a6b" /><circle cx="5" cy="10" r="1.500" fill="#e0302a" /><path d="M6 4l3-2v1.500c3 0 5 1 5 5-1-2-2-3-5-3V7z" fill="#4c8cc8" /></g>,
  import: <g><path d="M6 2h7v12H6z" fill="#fff" stroke="#8d98a5" /><path d="M8 5h4M8 11h4" stroke="#8d98a5" /><path d="M1 7h4V5l3 3-3 3V9H1z" fill="#4c8cc8" /></g>,
  verify: <g><path d="M2.500 5.500h10v6h-10z" fill="#e4ebf2" stroke="#3a4a6b" strokeWidth="1.500" /><path d="M1 14h13" stroke="#3a4a6b" strokeWidth="2" /><path d="M6 7l2 3 6-8" fill="none" stroke="#329257" strokeWidth="2" /></g>,
  gridOff: <g><path d="M2 7h8v7H2z" fill="#cdd4db" /><path d="M2 10h8M6 7v7M7 9l7-7M10 14h4" stroke="#a3adb7" strokeWidth="1.500" /></g>,
  table: <g><path d="M2 3h12v10H2z" fill="#3a4a6b" /><path d="M3 6h10M3 9h10M3 12h10" stroke="#e4ebf2" strokeDasharray="2 1" strokeWidth="1.500" /></g>,
  sync: <g><path d="M5 3h9v4H5zM5 10h9v4H5z" fill="#ecd08a" stroke="#8d98a5" /><path d="M4 4C1 7 2 11 5 13M5 13H2M12 11c3-2 2-6-1-7" fill="none" stroke="#3a77bd" strokeWidth="1.500" /></g>,
  div: <g><path d="M2.500 3.500h12v9h-12z" fill="#fff" stroke="#6c7684" /><path d="M4 6v4h2V6zM8 6v4M10 6l1 4 2-4" fill="none" stroke="#3a4a6b" /></g>,
  dev: <g><path d="M2.500 1.500h12v13h-12z" fill="#fff" stroke="#6c7684" /><path d="M4 4v3h2V4zM8 4v3h2M11 4l1 3 1-3" fill="none" stroke="#3a4a6b" /><path d="M4 10h9v4H4z" fill="#ecd08a" /><path d="M6 12l4-2v4z" fill="#4c8cc8" /></g>,
  pen: <path d="M2 13l2-4 7-6 2 2-6 7zM9 13h4" fill="#c3ccd6" stroke="#a3adb7" />,
  list: <path d="M3 3h2M3 8h2M3 13h2M7 3h7M7 8h7M7 13h7" stroke="#a3b3c4" strokeWidth="1.500" />,
  edit: <g><path d="M2 3h8M2 6h6M2 9h4M2 13h11M12 8v5" stroke="#6c7684" /><path d="M5 12l2-5 6-5 2 2-7 6z" fill="#329257" /></g>,
  editOff: <g><path d="M3 2h9v12H3z" fill="#eef1f4" stroke="#a9b5c0" /><path d="M5 5h4M5 8h3M7 12l6-8" stroke="#a9b5c0" strokeWidth="1.500" /></g>,
  watch: <g><path d="M2.500 3.500h12v10h-12z" fill="#eef1f4" stroke="#a3adb7" /><path d="M2 5h12" stroke="#a3adb7" strokeWidth="2" /><circle cx="6" cy="10" r="2" fill="none" stroke="#8d98a5" /><circle cx="11" cy="10" r="2" fill="none" stroke="#8d98a5" /></g>,
  pattern: <path d="M2 4h12M2 8h12M2 12h12" stroke="#7f8892" strokeWidth="2.500" strokeDasharray="2 1" />,
  download: <g><path d="M7 2h5v5h2l-4 4-4-4h1z" fill="#c3d0de" /><path d="M2 6h4M4 12h8M8 14h4" stroke="#a3b3c4" strokeWidth="1.500" /></g>,
  pcClock: <g><path d="M1.500 2.500h9v6h-9z" fill="#e4ebf2" stroke="#55606f" strokeWidth="1.500" /><path d="M3 12h5" stroke="#4c8cc8" /><circle cx="11" cy="11" r="3.500" fill="#eef1f4" stroke="#55606f" /><path d="M11 9v2h2" fill="none" stroke="#55606f" /></g>,
  docClock: <g><path d="M2.500 1.500h8v11h-8z" fill="#fff" stroke="#8d98a5" /><path d="M4 5h4M4 8h2" stroke="#8d98a5" /><circle cx="11" cy="11" r="3.500" fill="#eef1f4" stroke="#55606f" /><path d="M11 9v2h2" fill="none" stroke="#55606f" /></g>,
  pcWarn: <g><path d="M2.500 2.500h10v6h-10z" fill="#d8e4f6" stroke="#6c7684" strokeWidth="1.500" /><path d="M4 12h4" stroke="#4c8cc8" strokeWidth="2" /><path d="M11 6l4.500 8.500h-9z" fill="#f0cf6c" /><path d="M11 9v3M11 13v1" stroke="#55606f" /></g>,
  record: <g><circle cx="8" cy="8" r="6" fill="#d0d7df" stroke="#b3bfcb" /><circle cx="8" cy="8" r="3.500" fill="#a3b1bf" /></g>,
  play: <path d="M4 3l9 5-9 5z" fill="#a9b5c0" />,
  stop: <path d="M4 4h8v8H4z" fill="#a9b5c0" />,
  pause: <path d="M4 3h3v10H4zM9 3h3v10H9z" fill="#a9b5c0" />,
  first: <path d="M2 3h2v10H2zM9 3v10L4 8zM14 3v10L9 8z" fill="#a9b5c0" />,
  last: <path d="M12 3h2v10h-2zM2 3v10l5-5zM7 3v10l5-5z" fill="#a9b5c0" />,
  up: <path d="M8 4l5 9H3z" fill="#a9b5c0" />,
  down: <path d="M8 13L3 4h10z" fill="#a9b5c0" />,
  prev: <path d="M4 4h2v8H4zM12 4v8L7 8z" fill="#a9b5c0" />,
  next: <path d="M10 4h2v8h-2zM4 4v8l5-4z" fill="#a9b5c0" />,
  gt: <path d="M4 4l8 4-8 4" fill="none" stroke="#a3b1bf" strokeWidth="2.200" />,
  globe: <g><circle cx="8" cy="8" r="6" fill="#a9b5c0" /><path d="M4 8h6M8 5l3 3-3 3" fill="none" stroke="#d8dfe6" strokeWidth="1.500" /></g>,
  hand: <path d="M4 9V4h1.500v4V2H7v6-7h1.500v7V3H10v8l3-3 1 1-4 6H6z" fill="#bccbda" />,
  pcOff: <g><path d="M2.500 2.500h8v6h-8z" fill="#e4ebf2" stroke="#a3b1bf" strokeWidth="1.500" /><path d="M6 9v3h5M8.500 8.500h6v5h-4z" fill="#eef1f4" stroke="#a3b1bf" /></g>,
  timer: <g><circle cx="8" cy="9" r="5" fill="#eef1f4" stroke="#a3b1bf" strokeWidth="1.500" /><path d="M6 1.500h4M8 2v2M8 9l2-3" stroke="#8d98a5" /></g>,
  badge: <g><path d="M2 3h12v10H2z" fill="#8a8d92" /><path d="M4 6h2v2H4v2h2M8 6v4h2V6M12 5v6" fill="none" stroke="#d3d6da" /></g>,
  cut: <g><path d="M4 2l5 8M12 2L7 10" stroke="#55606f" strokeWidth="1.800" /><circle cx="4.500" cy="12" r="2" fill="none" stroke="#3a77bd" strokeWidth="1.500" /><circle cx="11.500" cy="12" r="2" fill="none" stroke="#3a77bd" strokeWidth="1.500" /></g>,
  copy: <g><path d="M2.500 2.500h6v8h-6z" fill="#fff" stroke="#8d98a5" /><path d="M7.500 6.500h7v8h-7z" fill="#fff" stroke="#6c7684" /><path d="M4 5h3M9 9h4M9 12h4" stroke="#4c8cc8" /></g>,
  treeOff: <path d="M3 2h7v4H3zM4 6v7h4M8 9h6v2H8zM8 12h6v2H8z" fill="#b3bfcb" stroke="#a3adb7" />,
  swap: <g><path d="M6 2h5v12H6z" fill="#3a4a6b" /><path d="M5 2C1 4 1 11 5 14M11 2c4 2 4 9 0 12" fill="none" stroke="#3a77bd" strokeWidth="1.500" /></g>,
  tool: <g><path d="M1 3h9v9H1z" fill="#3a4a6b" /><path d="M3 9V6h2v3M7 6v3h2" fill="none" stroke="#d8e4f6" /><path d="M12 4v10M9 3h6" stroke="#8d949c" strokeWidth="2.500" /></g>,
  eraser: <g><path d="M7 3h7l-1 5-6 6-5-3z" fill="#8d949c" /><path d="M3 8l4-2 3 3-4 5-4-2z" fill="#fff" stroke="#6c7684" /></g>,
  syncOff: <path d="M3 9c-2-6 6-8 8-4M3 5h5M14 8c1 6-7 7-8 3M7 9h5v4" fill="none" stroke="#a9b8c6" strokeWidth="1.500" />,
  circle: <g><path d="M3 12C0 7 3 2 8 2s8 5 5 10M13 12h-3M3 12h3" fill="none" stroke="#3a77bd" strokeWidth="1.500" /><path d="M5 6h6v4H5z" fill="#eef1f4" stroke="#55606f" /><path d="M7 8h2" stroke="#55606f" /></g>,
  check: <g><path d="M2.500 3.500h11v10h-11z" fill="#fff" stroke="#8d98a5" /><path d="M3 11h10" stroke="#8d98a5" strokeDasharray="2 1" /><path d="M4 7l3 4 7-8" fill="none" stroke="#e0302a" strokeWidth="2.500" /></g>,
  treeFind: <g><path d="M3 2v11h4M3 5h5M2 2h4" fill="none" stroke="#55606f" strokeWidth="1.500" /><path d="M7 4h5v3H7z" fill="#4c8cc8" /><circle cx="10" cy="10" r="3" fill="#eef1f4" stroke="#55606f" /><path d="M12 12l3 3" stroke="#55606f" strokeWidth="2" /></g>,
  treeTool: <g><path d="M3 2v11h3M3 6h4M2 2h4" fill="none" stroke="#55606f" strokeWidth="1.500" /><path d="M6 5h3v2H6zM6 9h3v2H6zM6 13h3v2H6z" fill="#4c8cc8" /><path d="M12 4v11M9 3h6" stroke="#8d949c" strokeWidth="2" /></g>,
  binoculars: <path d="M3 3h3v3h4V3h3l2 10H9v-3H7v3H1z" fill="#55606f" />,
  stairs: <g><path d="M6 2h9v3H6zM4 6h9v2H4zM1 10h9v4H1z" fill="#8d98a5" /><path d="M13 4v6l-3 2" fill="none" stroke="#4c8cc8" strokeWidth="2" /></g>,
  rack: <path d="M2 3h2v4H2zM5 3h2v4H5zM8 3h2v4H8zM11 3h2v4h-2zM2 9h13v1H2zM3 11h2v3H3zM6 11h2v3H6zM9 11h2v3H9zM12 11h2v3h-2z" fill="#55606f" />,
  net: <g><path d="M3 2h6v9H3z" fill="#3a4a6b" /><path d="M4 3h2v2H4z" fill="#49a86c" /><path d="M2 12h8M10 8h3v3M2 12v2M12 11l2 3" fill="none" stroke="#4c8cc8" strokeWidth="1.500" /></g>,
  back: <g><circle cx="8" cy="8" r="6" fill="#2d5f9e" /><path d="M2.500 6c2-5 9-5 11 0z" fill="#a9bccd" /><path d="M12 8H5l3-3M5 8l3 3" fill="none" stroke="#fff" strokeWidth="1.800" /></g>,
  upFolder: <g><path d="M2 5h5l1 1h6v8H2z" fill="#ecd08a" /><path d="M7 13V6H4l4-5 4 5H9v7z" fill="#329257" /></g>,
  newFolder: <g><path d="M2 5h5l1 1h5v8H2z" fill="#ecd08a" /><path d="M12 2v5M9.500 4.500h5M10 3l4 3M14 3l-4 3" stroke="#d8512a" /></g>,
  views: <g><path d="M2 3h12v11H2z" fill="#fff" stroke="#1b51a5" strokeWidth="1.500" /><path d="M2 4h12" stroke="#1b51a5" strokeWidth="2" /><path d="M4 8h9M4 11h9" stroke="#6c7684" strokeWidth="1.500" strokeDasharray="2 1.500" /></g>,
};

function Icon({ name }: { name: string }) {
  return <svg className="h-4 w-4 shrink-0" viewBox="0 0 16 16">{ICONS[name]}</svg>;
}
